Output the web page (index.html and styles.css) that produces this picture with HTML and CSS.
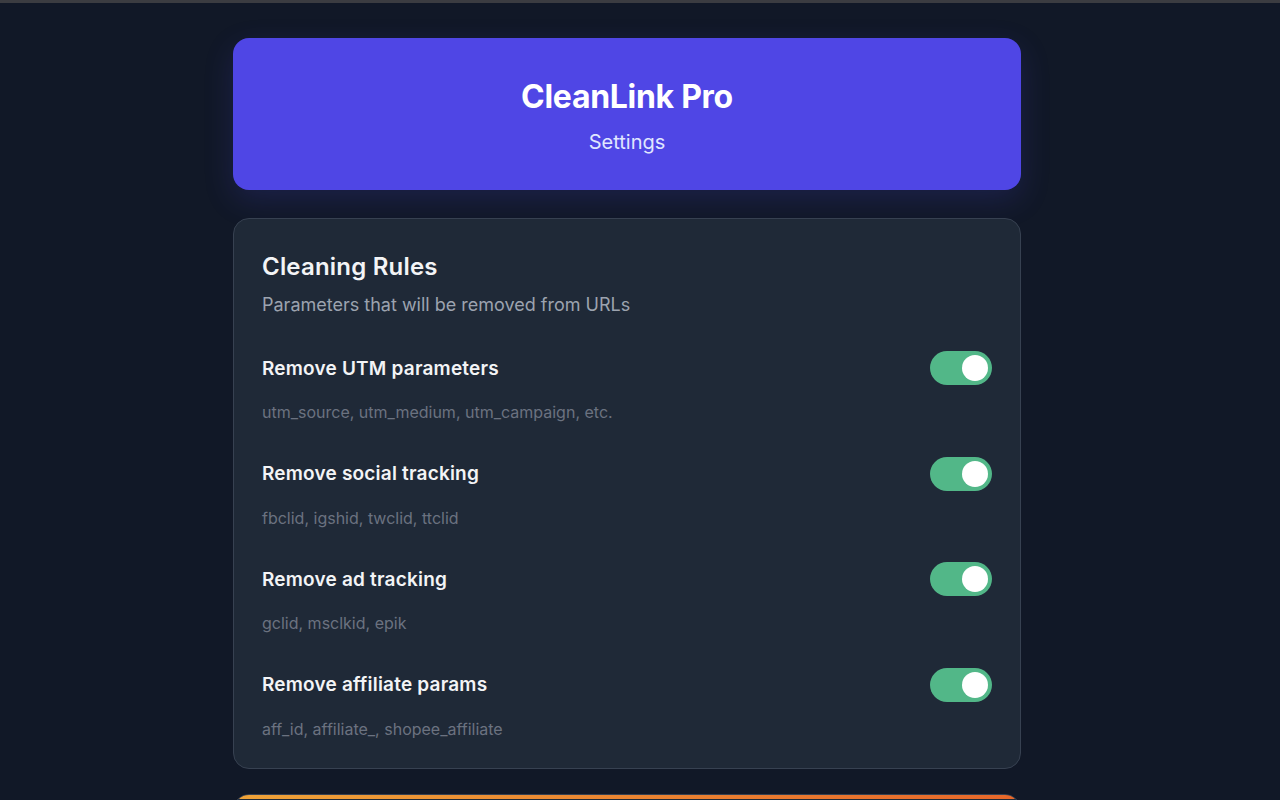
FILE: index.html
```html
<!DOCTYPE html>
<html lang="en">
<head>
    <meta charset="UTF-8">
    <meta name="viewport" content="width=device-width, initial-scale=1.0">
    <title>CleanLink Pro - Settings</title>
    <link rel="stylesheet" href="styles.css">
</head>
<body>
    <div class="container">
        <header class="header">
            <h1>CleanLink Pro</h1>
            <p>Settings</p>
        </header>

        <section class="card">
            <h2>Cleaning Rules</h2>
            <p class="card-desc">Parameters that will be removed from URLs</p>

            <div class="rule">
                <div class="rule-head">
                    <span class="rule-title">Remove UTM parameters</span>
                    <label class="toggle"><input type="checkbox" checked><span class="slider"></span></label>
                </div>
                <div class="rule-params">utm_source, utm_medium, utm_campaign, etc.</div>
            </div>

            <div class="rule">
                <div class="rule-head">
                    <span class="rule-title">Remove social tracking</span>
                    <label class="toggle"><input type="checkbox" checked><span class="slider"></span></label>
                </div>
                <div class="rule-params">fbclid, igshid, twclid, ttclid</div>
            </div>

            <div class="rule">
                <div class="rule-head">
                    <span class="rule-title">Remove ad tracking</span>
                    <label class="toggle"><input type="checkbox" checked><span class="slider"></span></label>
                </div>
                <div class="rule-params">gclid, msclkid, epik</div>
            </div>

            <div class="rule">
                <div class="rule-head">
                    <span class="rule-title">Remove affiliate params</span>
                    <label class="toggle"><input type="checkbox" checked><span class="slider"></span></label>
                </div>
                <div class="rule-params">aff_id, affiliate_, shopee_affiliate</div>
            </div>
        </section>

        <section class="card card-pro">
            <h2>Pro Features</h2>
            <p class="card-desc">Unlock advanced cleaning options</p>
        </section>
    </div>
</body>
</html>
```

FILE: styles.css
```css
body {
    margin: 0;
    padding: 0 26px 0 0;
    background-color: #111827;
    border-top: 3px solid #3b3c41;
    font-family: Inter, "Noto Sans", sans-serif;
    color: #f3f4f6;
}
.container {
    width: 788px;
    margin: 0 auto;
    padding-top: 35px;
}
.header {
    background-color: #4f46e5;
    border-radius: 16px;
    height: 152px;
    box-sizing: border-box;
    padding-top: 40px;
    text-align: center;
    box-shadow: 0 10px 30px rgba(79, 70, 229, 0.18);
}
.header h1 {
    margin: 0;
    font-size: 32px;
    font-weight: 700;
    color: #ffffff;
    letter-spacing: -0.3px;
    line-height: 38px;
}
.header p {
    margin: 14px 0 0;
    font-size: 20px;
    color: #e0e7ff;
    line-height: 24px;
}
.card {
    background-color: #1f2937;
    border: 1px solid #374151;
    border-radius: 16px;
    margin-top: 28px;
    padding: 33px 28px 29px;
}
.card h2 {
    margin: 0;
    font-size: 24px;
    font-weight: 600;
    line-height: 30px;
    letter-spacing: 0.2px;
    color: #f3f4f6;
}
.card-desc {
    margin: 12px 0 35px;
    font-size: 18px;
    line-height: 22px;
    color: #9ca3af;
}
.rule {
    margin-bottom: 34.5px;
}
.rule:last-child {
    margin-bottom: 0;
}
.rule-head {
    display: flex;
    justify-content: space-between;
    align-items: center;
    height: 34px;
}
.rule-title {
    font-size: 19px;
    font-weight: 600;
    letter-spacing: 0.2px;
    color: #f3f4f6;
}
.rule-params {
    margin-top: 17px;
    font-size: 16px;
    line-height: 20px;
    color: #6b7280;
}
.toggle {
    position: relative;
    display: inline-block;
    width: 62px;
    height: 34px;
}
.toggle input {
    opacity: 0;
    width: 0;
    height: 0;
}
.slider {
    position: absolute;
    inset: 0;
    background-color: #52b788;
    border-radius: 17px;
    cursor: pointer;
}
.slider::before {
    content: "";
    position: absolute;
    width: 26px;
    height: 26px;
    right: 4px;
    top: 4px;
    background-color: #ffffff;
    border-radius: 50%;
}
.card-pro {
    margin-top: 25px;
    position: relative;
    overflow: hidden;
}
.card-pro::before {
    content: "";
    position: absolute;
    top: 0;
    left: 0;
    right: 0;
    height: 4px;
    background: linear-gradient(90deg, #f0a338, #e8672a);
}
```
